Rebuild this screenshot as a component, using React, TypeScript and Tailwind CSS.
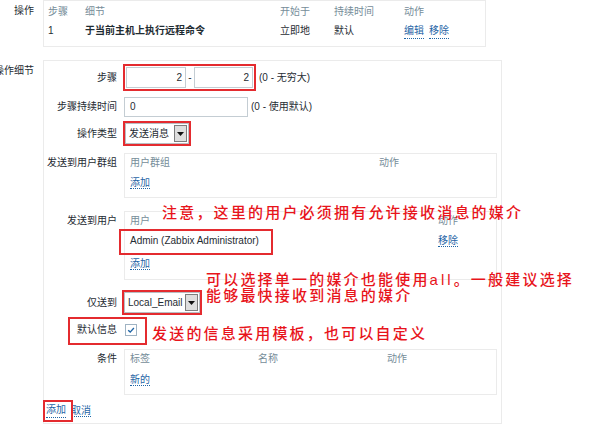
import React from "react";

const RED = "border-[#e42b2f]";

const Link = ({ children }: { children: React.ReactNode }) => (
  <span className="cursor-pointer border-b border-dotted border-[#1f65a6] text-[#1f65a6]">{children}</span>
);

const Arrow = () => (
  <span className="flex h-full w-[13px] items-center justify-center border border-[#7d7d7d] bg-[#dedede]">
    <svg width="7" height="4" viewBox="0 0 7 4">
      <polygon points="0,0 7,0 3.5,4" fill="#111" />
    </svg>
  </span>
);

const Select = ({ value, width }: { value: string; width: string }) => (
  <div className={`flex h-[21px] ${width} items-center justify-between border border-[#b8bec3] bg-white pl-[3px] pr-px`}>
    <span className="whitespace-nowrap">{value}</span>
    <div className="h-[17px]">
      <Arrow />
    </div>
  </div>
);

const Row = ({
  label,
  top,
  className,
  children,
}: {
  label: string;
  top?: boolean;
  className?: string;
  children: React.ReactNode;
}) => (
  <div className={`flex ${top ? "items-start" : "items-center"} ${className ?? ""}`}>
    <div className={`w-[73px] shrink-0 whitespace-nowrap text-right ${top ? "pt-[3px]" : ""}`}>{label}</div>
    <div className="ml-[7px] flex items-center">{children}</div>
  </div>
);

export default function App() {
  return (
    <div className="relative h-[426px] w-[591px] overflow-hidden bg-white font-[family-name:'Liberation_Sans','Noto_Sans_CJK_SC',sans-serif] text-[10px] leading-[14px] text-[#1f2c33]">
      {/* 操作 */}
      <div className="flex">
        <div className="flex w-[43px] shrink-0 justify-end pr-[9px] pt-[4px]">
          <span className="whitespace-nowrap">操作</span>
        </div>
        <div className="h-[47px] w-[443px] border border-[#ebebeb] px-[4px] pt-[4px]">
          <div className="grid grid-cols-[37px_195px_54px_70px_1fr] text-[#768d99]">
            <span>步骤</span>
            <span>细节</span>
            <span>开始于</span>
            <span>持续时间</span>
            <span>动作</span>
          </div>
          <div className="mt-[5px] grid grid-cols-[37px_195px_54px_70px_1fr]">
            <span>1</span>
            <span className="font-bold">于当前主机上执行远程命令</span>
            <span>立即地</span>
            <span>默认</span>
            <span className="flex gap-[5px]">
              <Link>编辑</Link>
              <Link>移除</Link>
            </span>
          </div>
        </div>
      </div>

      {/* 操作细节 */}
      <div className="mt-[13px] flex">
        <div className="flex w-[43px] shrink-0 justify-end pr-[9px] pt-[4px]">
          <span className="whitespace-nowrap">操作细节</span>
        </div>
        <div className="flex h-[364px] w-[459px] flex-col border border-[#ebebeb]">
          <Row label="步骤" className="mt-[3px]">
            <div className={`-ml-px flex h-[27px] items-center border-2 ${RED} p-px`}>
              <div className="flex h-[21px] w-[60px] items-center justify-end border border-[#c4cdd3] pr-[3px]">2</div>
              <span className="w-[8px] text-center">-</span>
              <div className="flex h-[21px] w-[59px] items-center justify-end border border-[#c4cdd3] pr-[3px]">2</div>
            </div>
            <span className="ml-[3px] whitespace-nowrap">(0 - 无穷大)</span>
          </Row>

          <Row label="步骤持续时间" className="mt-[6px]">
            <div className="flex h-[20px] w-[124px] items-center border border-[#c4cdd3] pl-[5px]">0</div>
            <span className="ml-[3px] whitespace-nowrap">(0 - 使用默认)</span>
          </Row>

          <Row label="操作类型" className="mt-[4px]">
            <div className={`-ml-px border-2 ${RED}`}>
              <Select value="发送消息" width="w-[64px]" />
            </div>
          </Row>

          <Row label="发送到用户群组" top className="mt-[7px]">
            <div className="h-[45px] w-[373px] border border-[#ebebeb] pl-[5px] pt-[2px]">
              <div className="grid grid-cols-[249px_1fr] text-[#768d99]">
                <span>用户群组</span>
                <span>动作</span>
              </div>
              <div className="mt-[6px]">
                <Link>添加</Link>
              </div>
            </div>
          </Row>

          <Row label="发送到用户" top className="mt-[13px]">
            <div className="h-[69px] w-[373px] border border-[#ebebeb] pl-[5px] pt-[2px]">
              <div className="grid grid-cols-[308px_1fr] text-[#768d99]">
                <span>用户</span>
                <span>动作</span>
              </div>
              <div className="mt-[6px] grid grid-cols-[308px_1fr]">
                <span>Admin (Zabbix Administrator)</span>
                <span>
                  <Link>移除</Link>
                </span>
              </div>
              <div className="mt-[9px]">
                <Link>添加</Link>
              </div>
            </div>
          </Row>

          <Row label="仅送到" className="mt-[10px]">
            <div className={`-ml-[2px] flex h-[25px] items-center border-2 ${RED}`}>
              <Select value="Local_Email" width="w-[76px]" />
            </div>
          </Row>

          <Row label="默认信息" className="mt-px h-[28px]">
            <div className="ml-px flex h-[12px] w-[12px] items-center justify-center border border-[#9fb3c3] bg-white">
              <svg width="10" height="10" viewBox="0 0 10 10">
                <polyline points="2.2,5.2 4.2,7.1 7.9,3" fill="none" stroke="#1f65a6" strokeWidth="1.4" />
              </svg>
            </div>
          </Row>

          <Row label="条件" top className="mt-[5px]">
            <div className="h-[46px] w-[373px] border border-[#ebebeb] pl-[5px] pt-[2px]">
              <div className="grid grid-cols-[128px_129px_1fr] text-[#768d99]">
                <span>标签</span>
                <span>名称</span>
                <span>动作</span>
              </div>
              <div className="mt-[7px]">
                <Link>新的</Link>
              </div>
            </div>
          </Row>

          <div className="mt-[5px] flex h-[21px] items-center pl-[2px]">
            <Link>添加</Link>
            <span className="ml-[5px]">
              <Link>取消</Link>
            </span>
          </div>
        </div>
      </div>

      {/* annotation boxes */}
      <div className={`absolute left-[119px] top-[229px] h-[26px] w-[154px] border-2 ${RED}`} />
      <div className={`absolute left-[68px] top-[317px] h-[28px] w-[79px] border-2 ${RED}`} />
      <div className={`absolute left-[43px] top-[400px] h-[22px] w-[30px] border-2 ${RED}`} />

      {/* annotation notes */}
      <div className="absolute left-[162px] top-[204px] whitespace-nowrap text-[15px] font-medium leading-[17px] tracking-[2.2px] text-[#e8141b]">
        注意，这里的用户必须拥有允许接收消息的媒介
      </div>
      <div className="absolute left-[206px] top-[272px] whitespace-nowrap text-[15px] font-medium leading-[16px] tracking-[2.2px] text-[#e8141b]">
        可以选择单一的媒介也能使用<span className="tracking-[3px]">all</span>。一般建议选择
        <br />
        能够最快接收到消息的媒介
      </div>
      <div className="absolute left-[152px] top-[325px] whitespace-nowrap text-[15px] font-medium leading-[17px] tracking-[2.2px] text-[#e8141b]">
        发送的信息采用模板，也可以自定义
      </div>
    </div>
  );
}
